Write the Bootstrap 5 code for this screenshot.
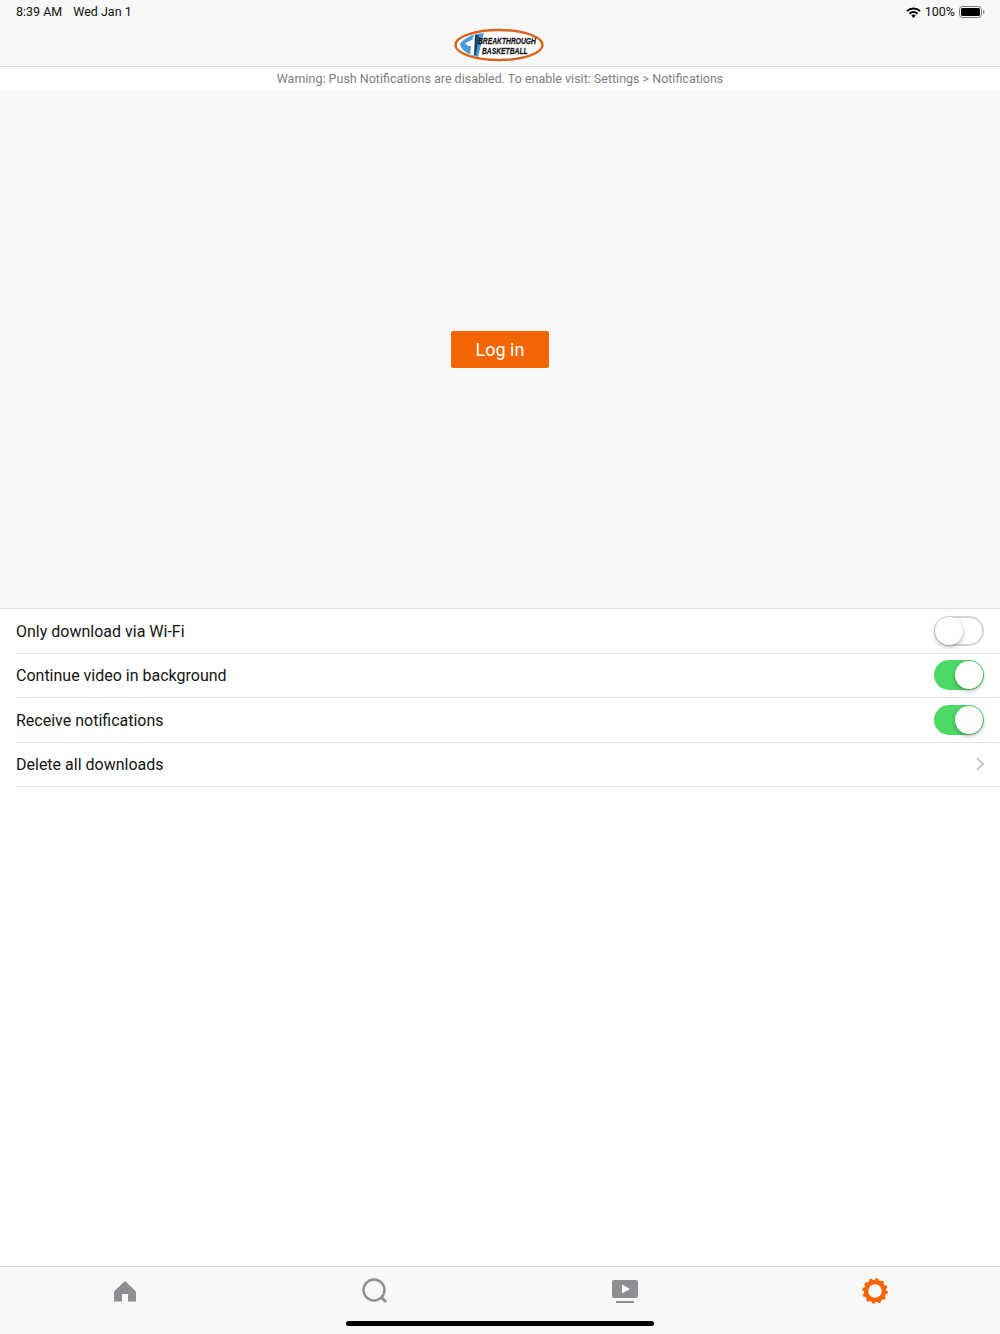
<!DOCTYPE html>
<html lang="en">
<head>
    <meta charset="UTF-8">
    <meta name="viewport" content="width=device-width, initial-scale=1.0">
    <title>Settings</title>
    <link href="https://cdn.jsdelivr.net/npm/bootstrap@5.3.0/dist/css/bootstrap.min.css" rel="stylesheet">
    <style>
        html, body { height: 1334px; overflow: hidden; }
        body { font-family: Roboto, "Noto Sans", "Liberation Sans", sans-serif; color: #111; background: #fff; }
        .app-top { height: 67px; background: #f8f8f8; border-bottom: 1px solid #d9d9d9; flex: none; }
        .status-row { height: 24px; padding: 0 15px 0 16px; font-size: 12.5px; line-height: 24px; }
        .status-time { margin-right: 11px; }
        .logo-row { height: 42px; padding-right: 3px; }
        .logo-word { font-family: "Liberation Sans", sans-serif; font-size: 9.5px; font-weight: 700; font-style: italic; fill: #111; stroke: #111; stroke-width: .25px; }
        .warn-bar { height: 23px; line-height: 23px; font-size: 12.5px; color: #808080; background: #fff; flex: none; }
        .login-area { height: 518px; background: #f8f8f8; flex: none; }
        .login-btn { width: 98px; height: 37px; padding: 0; border: 0; border-radius: 2px; background: #f26604; color: #fff; font-size: 18px; }
        .login-btn:hover { background: #f26604; color: #fff; }
        .set-list { border-top: 1px solid #e0e0e0; flex: none; }
        .set-row { height: 44.5px; margin-left: 16px; padding-right: 16px; border-bottom: 1px solid #e3e3e3; font-size: 16px; color: #141414; }
        .set-label { padding-top: 2px; }
        .ios-switch { width: 50px; height: 30px; border-radius: 15px; position: relative; background: #fff; border: 2px solid #d4d4d4; }
        .ios-switch::after { content: ""; position: absolute; top: -1px; left: -1px; width: 28px; height: 28px; border-radius: 50%; background: #fff; box-shadow: 0 2px 4px rgba(0, 0, 0, .3); }
        .ios-switch.is-on { background: #4cd964; border-color: #4cd964; }
        .ios-switch.is-on::after { left: auto; right: -1px; }
        .tab-bar { height: 68px; background: #f8f8f8; border-top: 1px solid #d4d4d4; flex: none; position: relative; }
        .tab-cell { width: 25%; height: 48px; }
        .home-bar { position: absolute; left: 346px; bottom: 8px; width: 308px; height: 5px; border-radius: 3px; background: #000; }
    </style>
</head>
<body>
    <div class="d-flex flex-column h-100">
        <div class="app-top">
            <div class="status-row d-flex align-items-center">
                <span class="status-time">8:39 AM</span>
                <span>Wed Jan 1</span>
                <span class="ms-auto d-flex align-items-center gap-1">
                    <svg width="15" height="11" viewBox="0 0 15 11"><path d="M7.5 11 5.2 8.5a3.3 3.3 0 0 1 4.6 0z" fill="#000"/><path d="M3.5 6.7a5.7 5.7 0 0 1 8 0M1 4.1a9.3 9.3 0 0 1 13 0" fill="none" stroke="#000" stroke-width="1.9"/></svg>
                    <span>100%</span>
                    <svg width="26" height="12" viewBox="0 0 26 12"><rect x=".5" y=".5" width="22" height="11" rx="3" fill="none" stroke="#777"/><rect x="2" y="2" width="19" height="8" rx="1.6" fill="#000"/><rect x="24" y="4" width="1.4" height="4" rx=".7" fill="#888"/></svg>
                </span>
            </div>
            <div class="logo-row d-flex justify-content-center align-items-center">
                <svg width="90" height="34" viewBox="0 0 90 34">
                    <ellipse cx="45" cy="17" rx="43.5" ry="15" fill="#fff" stroke="#d9651c" stroke-width="2.4"/>
                    <path d="M6 16C10 10 18 6 30 5L24 29C14 27 7 22 6 16z" fill="#4a9ad8"/>
                    <path d="M11 15l7-3 2-5 4 0-3 20-5 0 1-9-3 0z" fill="#fff"/>
                    <path d="M21 7h4l-3 20h-2z" fill="#17456e"/>
                    <text class="logo-word" transform="translate(24 16) scale(.71 1)">BREAKTHROUGH</text>
                    <text class="logo-word" transform="translate(28 26) scale(.71 1)">BASKETBALL</text>
                </svg>
            </div>
        </div>

        <div class="warn-bar text-center">Warning: Push Notifications are disabled. To enable visit: Settings &gt; Notifications</div>

        <div class="login-area d-flex justify-content-center align-items-center">
            <button type="button" class="btn login-btn">Log in</button>
        </div>

        <div class="set-list">
            <div class="set-row d-flex align-items-center justify-content-between">
                <span class="set-label">Only download via Wi-Fi</span>
                <span class="ios-switch"></span>
            </div>
            <div class="set-row d-flex align-items-center justify-content-between">
                <span class="set-label">Continue video in background</span>
                <span class="ios-switch is-on"></span>
            </div>
            <div class="set-row d-flex align-items-center justify-content-between">
                <span class="set-label">Receive notifications</span>
                <span class="ios-switch is-on"></span>
            </div>
            <div class="set-row d-flex align-items-center justify-content-between">
                <span class="set-label">Delete all downloads</span>
                <svg width="8" height="14" viewBox="0 0 8 14"><path d="M1 1l6 6-6 6" fill="none" stroke="#c7c7cc" stroke-width="2"/></svg>
            </div>
        </div>

        <div class="flex-grow-1"></div>

        <div class="tab-bar">
            <div class="d-flex">
                <div class="tab-cell d-flex justify-content-center align-items-center">
                    <svg width="24" height="22" viewBox="0 0 24 22"><path d="M12 1 23 11.5V21.5H15V14H9V21.5H1V11.5z" fill="#8e8e93"/></svg>
                </div>
                <div class="tab-cell d-flex justify-content-center align-items-center">
                    <svg width="26" height="26" viewBox="0 0 26 26"><circle cx="12" cy="12" r="10.5" fill="none" stroke="#8e8e93" stroke-width="2.4"/><path d="M19.5 19.5 24 24" stroke="#8e8e93" stroke-width="3"/></svg>
                </div>
                <div class="tab-cell d-flex justify-content-center align-items-center">
                    <svg width="26" height="23" viewBox="0 0 26 23"><rect width="26" height="18" rx="2" fill="#8e8e93"/><path d="M10 4.5 18 9l-8 4.5z" fill="#fff"/><rect x="4" y="21" width="18" height="2" fill="#8e8e93"/></svg>
                </div>
                <div class="tab-cell d-flex justify-content-center align-items-center">
                    <svg width="26" height="26" viewBox="0 0 26 26"><circle cx="13" cy="13" r="9" fill="none" stroke="#f26604" stroke-width="4.5"/><circle cx="13" cy="13" r="11.5" fill="none" stroke="#f26604" stroke-width="2.5" stroke-dasharray="3 3.02"/></svg>
                </div>
            </div>
            <div class="home-bar"></div>
        </div>
    </div>
    <script src="https://cdn.jsdelivr.net/npm/bootstrap@5.3.0/dist/js/bootstrap.bundle.min.js"></script>
</body>
</html>
